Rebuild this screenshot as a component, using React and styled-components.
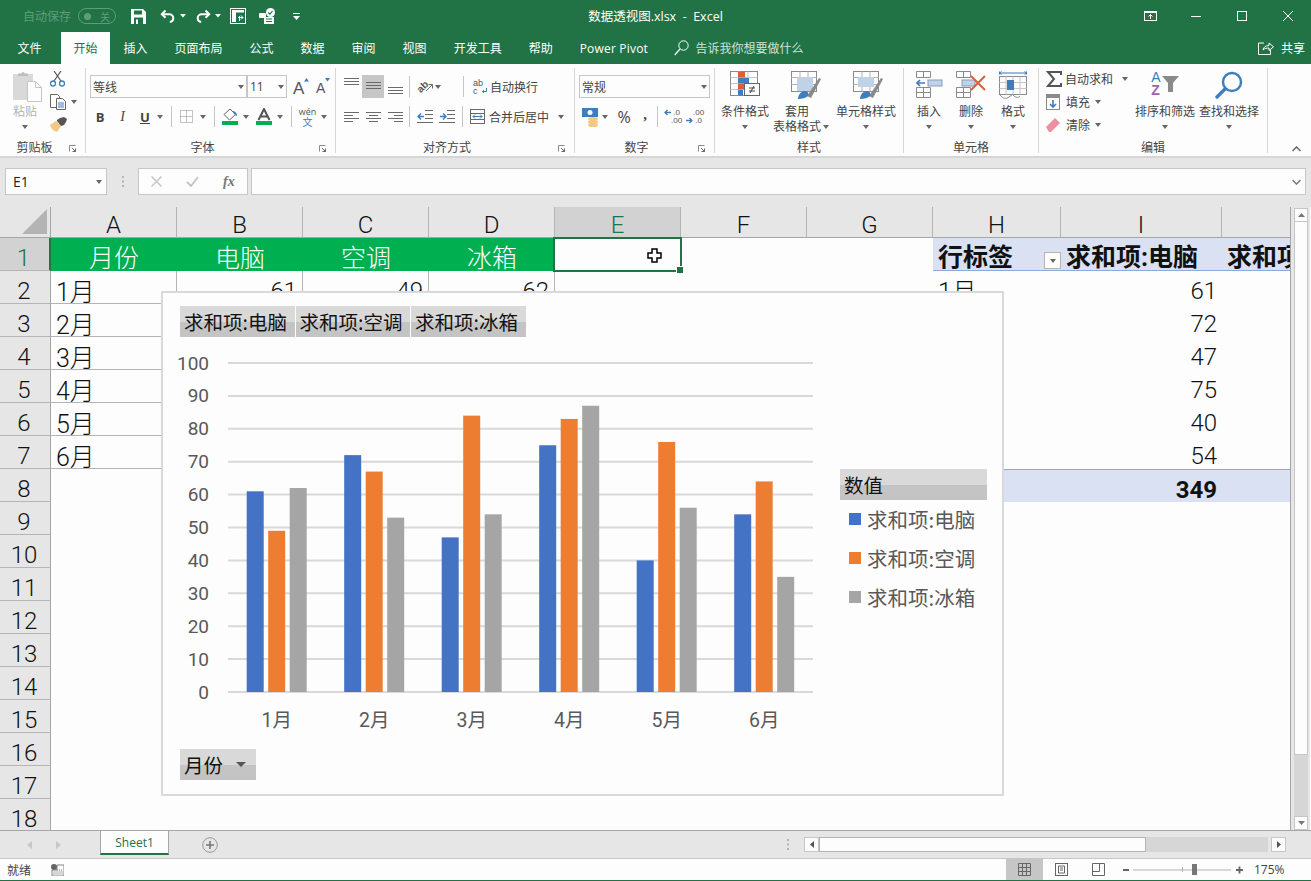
import React from "react"
import styled, { createGlobalStyle } from "styled-components"

const GREEN = "#217346"
const UI_FONT = `"Open Sans", "Noto Sans CJK SC", sans-serif`
const SHEET_FONT = `Roboto, "Noto Sans CJK SC", sans-serif`

const Global = createGlobalStyle`
  html, body { margin: 0; padding: 0; background: #fdfdfd; }
  * { box-sizing: border-box; }
`

const Svg = ({ w, h, children }) => (
  <svg width={w} height={h} viewBox={`0 0 ${w} ${h}`} fill="none" style={{ display: "block", flexShrink: 0 }}>
    {children}
  </svg>
)

/* ---------- title bar ---------- */
const Page = styled.div`
  width: 1311px;
  height: 881px;
  overflow: hidden;
  display: flex;
  flex-direction: column;
  font-family: ${UI_FONT};
  background: #fdfdfd;
`
const TitleBar = styled.div`
  height: 32px;
  background: ${GREEN};
  display: grid;
  grid-template-columns: 1fr auto 1fr;
  align-items: center;
  color: #fff;
`
const Quick = styled.div`
  display: flex;
  align-items: center;
  padding-left: 23px;
`
const AutoSave = styled.span`
  font-size: 12px;
  color: #5f9c7b;
  white-space: nowrap;
`
const Toggle = styled.span`
  width: 38px;
  height: 16px;
  margin: 0 15px 0 7px;
  border: 1px solid #5f9c7b;
  border-radius: 8px;
  display: flex;
  align-items: center;
  justify-content: space-between;
  padding: 0 5px;
  font-size: 10px;
  color: #5f9c7b;
  &::before {
    content: "";
    width: 7px;
    height: 7px;
    border-radius: 50%;
    background: #5f9c7b;
  }
`
const QuickSlot = styled.span`
  display: flex;
  align-items: center;
  margin-left: ${p => p.$ml || 0}px;
`
const DocTitle = styled.div`
  font-size: 12.5px;
  padding-bottom: 1px;
  white-space: pre;
`
const WinControls = styled.div`
  display: flex;
  justify-content: flex-end;
`
const WinBtn = styled.span`
  width: 46px;
  height: 32px;
  display: flex;
  align-items: center;
  justify-content: center;
`

/* ---------- tabs ---------- */
const TabRow = styled.div`
  height: 32px;
  background: ${GREEN};
  display: flex;
  align-items: stretch;
  padding-left: 4px;
  color: #fff;
  font-size: 12px;
`
const Tab = styled.div`
  display: flex;
  align-items: center;
  padding: 0 ${p => (p.$active ? 12.5 : 13.5)}px;
  margin-left: ${p => p.$ml || 0}px;
  margin-right: ${p => p.$mr || 0}px;
  white-space: nowrap;
  background: ${p => (p.$active ? "#fdfdfd" : "transparent")};
  color: ${p => (p.$active ? GREEN : "#fff")};
  letter-spacing: ${p => (p.$spaced ? "0.2px" : "normal")};
`
const TellMe = styled.div`
  display: flex;
  align-items: center;
  gap: 7px;
  margin-left: 12px;
  color: #cfe3d8;
`
const Share = styled.div`
  margin-left: auto;
  padding-right: 6px;
  display: flex;
  align-items: center;
  gap: 7px;
`

/* ---------- ribbon ---------- */
const Ribbon = styled.div`
  height: 94px;
  display: flex;
  position: relative;
  background: #fdfdfd;
  border-bottom: 2px solid #d6d6d6;
  color: #444;
  font-size: 12px;
`
const Group = styled.div`
  width: ${p => p.$w}px;
  height: 92px;
  flex-shrink: 0;
  display: flex;
  flex-direction: column;
`
const GroupBody = styled.div`
  flex: 1;
  display: flex;
  min-height: 0;
  padding-left: ${p => p.$pl || 0}px;
`
const LabelRow = styled.div`
  height: 20px;
  padding-top: 4px;
  display: flex;
  align-items: center;
`
const GroupName = styled.div`
  flex: 1;
  text-align: center;
  font-size: 12px;
  line-height: 16px;
`
const Launcher = styled.span`
  width: 16px;
  display: flex;
  justify-content: flex-start;
`
const GroupSep = styled.div`
  width: 1px;
  height: 85px;
  margin-top: 4px;
  background: #d6d6d6;
  flex-shrink: 0;
`
const Stack = styled.div`
  display: flex;
  flex-direction: column;
  padding-top: 11px;
  gap: 7px;
`
const ToolRow = styled.div`
  display: flex;
  align-items: center;
  height: 23px;
`
const Tool = styled.span`
  width: ${p => p.$w}px;
  height: 23px;
  margin-left: ${p => p.$ml || 0}px;
  padding-bottom: ${p => p.$pb || 0}px;
  display: flex;
  align-items: center;
  justify-content: ${p => (p.$left ? "flex-start" : "center")};
  flex-shrink: 0;
  white-space: nowrap;
  background: ${p => (p.$on ? "#c6c6c6" : "transparent")};
  font-family: ${p => (p.$serif ? `"Liberation Serif", serif` : "inherit")};
  font-size: ${p => p.$fs || 12}px;
  font-weight: ${p => (p.$bold ? 700 : 400)};
  font-style: ${p => (p.$italic ? "italic" : "normal")};
  text-decoration: ${p => (p.$under ? "underline" : "none")};
  color: ${p => p.$color || "#444"};
`
const Caret = styled.span`
  width: 10px;
  height: 23px;
  margin-left: ${p => p.$ml || 0}px;
  flex-shrink: 0;
  display: flex;
  align-items: center;
  justify-content: center;
  &::before {
    content: "";
    border-left: 3.5px solid transparent;
    border-right: 3.5px solid transparent;
    border-top: 4px solid #666;
  }
`
const ToolSep = styled.span`
  width: 1px;
  height: 21px;
  margin-left: ${p => p.$ml || 0}px;
  background: #c6c6c6;
  flex-shrink: 0;
`
const Combo = styled.div`
  width: ${p => p.$w}px;
  height: 23px;
  border: 1px solid #c6c6c6;
  background: #fdfdfd;
  display: flex;
  align-items: center;
  justify-content: space-between;
  padding-left: 2px;
  color: #444;
  font-size: 12px;
  flex-shrink: 0;
`
const GrowBtn = styled.span`
  width: 15px;
  height: 23px;
  margin-left: ${p => p.$ml || 0}px;
  display: flex;
  align-items: flex-end;
  flex-shrink: 0;
  font-family: "Liberation Sans", sans-serif;
  font-size: ${p => p.$fs}px;
  line-height: 19px;
  color: #555;
`
const GrowMark = styled.span`
  align-self: flex-start;
  margin-top: 3px;
`
const WenStack = styled.span`
  display: flex;
  flex-direction: column;
  align-items: center;
  font-size: 9px;
  line-height: 10px;
  color: #555;
`
const WenChar = styled.span`
  color: #3f7dbd;
  font-size: 10px;
  line-height: 10px;
`
const DecStack = styled.span`
  display: grid;
  grid-template-columns: 7px 9px;
  font-family: "Liberation Sans", sans-serif;
  font-size: 8px;
  line-height: 8px;
  align-items: center;
  text-align: right;
  color: #555;
`
const Orient = styled.span`
  display: flex;
  align-items: center;
  font-family: "Liberation Sans", sans-serif;
  font-size: 10px;
  font-weight: 700;
  color: #555;
`
const OrientText = styled.span`
  display: block;
  line-height: 10px;
  transform: rotate(-45deg);
  margin-right: -2px;
`
const Large = styled.div`
  width: ${p => p.$w}px;
  margin-left: ${p => p.$ml || 0}px;
  flex-shrink: 0;
  display: flex;
  flex-direction: column;
  align-items: center;
  padding-top: 7px;
  color: ${p => (p.$off ? "#b4b4b4" : "#444")};
  line-height: 15px;
`
const LargeIcon = styled.div`
  height: 33px;
  margin-left: ${p => p.$shift || 0}px;
  display: flex;
  align-items: flex-start;
  justify-content: center;
`
const LargeText = styled.div`
  white-space: nowrap;
  display: flex;
  align-items: center;
  height: 15px;
`
const LargeCaret = styled(Caret)`
  height: 15px;
`
const TrailCaret = styled(LargeCaret)`
  margin-right: -10px;
`
const SmallCol = styled.div`
  display: flex;
  flex-direction: column;
  padding-top: ${p => p.$pt || 4}px;
  margin-left: ${p => p.$ml || 0}px;
`
const SmallRow = styled.div`
  display: flex;
  align-items: center;
  height: 23px;
  gap: 3px;
  white-space: nowrap;
`
const Collapse = styled.span`
  position: absolute;
  right: 10px;
  bottom: 4px;
`

/* ---------- formula bar ---------- */
const FormulaBar = styled.div`
  height: 49px;
  background: #e6e6e6;
  display: flex;
  align-items: flex-start;
  padding: 10px 5px 0;
`
const NameBox = styled.div`
  width: 102px;
  height: 27px;
  border: 1px solid #c6c6c6;
  background: #fdfdfd;
  display: flex;
  align-items: center;
  justify-content: space-between;
  padding: 0 2px 0 7px;
  font-size: 14px;
  color: #222;
`
const Dots = styled.span`
  width: 31px;
  height: 27px;
  display: flex;
  align-items: center;
  justify-content: center;
`
const FxBox = styled.div`
  width: 110px;
  height: 27px;
  border: 1px solid #c6c6c6;
  background: #fdfdfd;
  display: flex;
  align-items: center;
  gap: 24px;
  padding-left: 12px;
`
const FxText = styled.span`
  font-family: "Liberation Serif", serif;
  font-style: italic;
  font-weight: 700;
  font-size: 14px;
  color: #777;
`
const FormulaInput = styled.div`
  flex: 1;
  height: 27px;
  margin-left: 3px;
  border: 1px solid #c6c6c6;
  background: #fdfdfd;
  display: flex;
  align-items: center;
  justify-content: flex-end;
  padding-right: 4px;
`

/* ---------- sheet ---------- */
const SheetRow = styled.div`
  height: 623px;
  display: flex;
`
const GridArea = styled.div`
  width: 1291px;
  height: 623px;
  position: relative;
  overflow: hidden;
  border-right: 1px solid #a6a6a6;
`
const Grid = styled.div`
  display: grid;
  grid-template-columns: 51px repeat(7, 126px) 128px 161px 68px;
  grid-template-rows: 31px;
  grid-auto-rows: 33px;
  font-family: ${SHEET_FONT};
  font-weight: 300;
  font-size: 24px;
  color: #111;
`
const Corner = styled.div`
  background: #e6e6e6;
  border-right: 1px solid #a6a6a6;
  border-bottom: 1px solid #a6a6a6;
  display: flex;
  align-items: flex-end;
  justify-content: flex-end;
  padding: 0 3px 3px 0;
`
const ColHead = styled.div`
  background: ${p => (p.$active ? "#d2d2d2" : "#e6e6e6")};
  color: ${p => (p.$active ? GREEN : "#111")};
  border-bottom: 1px solid #a6a6a6;
  border-right: ${p => (p.$last ? "none" : "1px solid #b4b4b4")};
  display: flex;
  align-items: center;
  justify-content: center;
  padding-top: 5px;
`
const RowHead = styled.div`
  background: ${p => (p.$active ? "#d2d2d2" : "#e6e6e6")};
  color: ${p => (p.$active ? GREEN : "#111")};
  border-right: ${p => (p.$active ? `2px solid ${GREEN}` : "1px solid #a6a6a6")};
  border-bottom: 1px solid #b4b4b4;
  display: flex;
  align-items: center;
  justify-content: center;
  padding: 7px 2px 0 0;
`
const Cell = styled.div`
  position: relative;
  overflow: hidden;
  white-space: nowrap;
  display: flex;
  align-items: center;
  justify-content: ${p => ({ right: "flex-end", center: "center" }[p.$align] || "flex-start")};
  padding: ${p => p.$pt ?? 7}px 5px 0;
  background: ${p => p.$bg || "transparent"};
  color: ${p => p.$color || "inherit"};
  font-size: ${p => p.$fs || 24}px;
  font-weight: ${p => (p.$bold ? 700 : "inherit")};
  border-right: ${p => (p.$line ? "1px solid #b4b4b4" : "none")};
  border-bottom: ${p => (p.$under ? `1px solid ${p.$under}` : "none")};
  border-top: ${p => (p.$over ? `1px solid ${p.$over}` : "none")};
`
const SelectedCell = styled.div`
  position: relative;
  z-index: 2;
  &::before {
    content: "";
    position: absolute;
    inset: -1px -1px -1px -2px;
    border: 2px solid ${GREEN};
  }
  &::after {
    content: "";
    position: absolute;
    right: -3px;
    bottom: -3px;
    width: 6px;
    height: 6px;
    background: ${GREEN};
    border: 1px solid #fdfdfd;
  }
`
const Pointer = styled.span`
  position: absolute;
  left: 92px;
  top: 10px;
`
const FilterBtn = styled.span`
  position: absolute;
  right: 0;
  bottom: 1px;
  width: 17px;
  height: 17px;
  background: #fdfdfd;
  border: 1px solid #b4b4b4;
  display: flex;
  align-items: center;
  justify-content: center;
  &::before {
    content: "";
    border-left: 3.5px solid transparent;
    border-right: 3.5px solid transparent;
    border-top: 4px solid #666;
  }
`

/* ---------- chart ---------- */
const Chart = styled.div`
  position: absolute;
  left: 161px;
  top: 84px;
  width: 843px;
  height: 505px;
  z-index: 5;
  background: #fdfdfd;
  border: 2px solid #d9d9d9;
  padding: 13px 17px 0;
  display: flex;
  flex-direction: column;
  font-family: "Noto Sans CJK SC", sans-serif;
`
const FieldRow = styled.div`
  display: flex;
  gap: 1px;
`
const FieldBtn = styled.div`
  width: ${p => p.$w}px;
  height: 31px;
  background: linear-gradient(#d9d9d9 0 53%, #c4c4c4 53% 100%);
  display: flex;
  align-items: center;
  justify-content: space-between;
  padding: 0 4px;
  font-size: 19.5px;
  color: #111;
  white-space: nowrap;
  flex-shrink: 0;
`
const FieldCaret = styled.span`
  margin-right: 6px;
`
const PlotRow = styled.div`
  display: flex;
  margin: 8px 0 14px -17px;
`
const Legend = styled.div`
  margin: 124px 0 0 15px;
  display: flex;
  flex-direction: column;
`
const LegendList = styled.div`
  margin-top: -1px;
`
const LegendItem = styled.div`
  height: 39px;
  display: flex;
  align-items: center;
  gap: 6px;
  padding-left: 9px;
  font-size: 20.5px;
  color: #595959;
  white-space: nowrap;
`
const Swatch = styled.span`
  width: 12px;
  height: 12px;
  background: ${p => p.$c};
`
const PlotText = styled.text`
  font-family: Roboto, "Noto Sans CJK SC", sans-serif;
  font-size: ${p => p.$fs || 19}px;
  fill: #595959;
`

/* ---------- scrollbars / bottom ---------- */
const VScroll = styled.div`
  width: 19px;
  background: #e6e6e6;
  display: flex;
  flex-direction: column;
  padding: 1px 2px 0 3px;
`
const ScrollBtn = styled.span`
  height: 14px;
  background: #fdfdfd;
  border: 1px solid #c6c6c6;
  display: flex;
  align-items: center;
  justify-content: center;
  flex-shrink: 0;
`
const VThumb = styled.div`
  height: 533px;
  background: #fdfdfd;
  border: 1px solid #c6c6c6;
  border-top: none;
`
const VTrack = styled.div`
  flex: 1;
  background: #d6d6d6;
`
const TabBar = styled.div`
  height: 28px;
  background: #e6e6e6;
  border-top: 1px solid #a6a6a6;
  display: flex;
  align-items: flex-start;
`
const SheetNav = styled.div`
  width: 100px;
  height: 27px;
  display: flex;
  align-items: center;
  gap: 24px;
  padding-left: 27px;
`
const SheetTab = styled.div`
  width: 69px;
  height: 25px;
  margin-top: -1px;
  background: #fdfdfd;
  border: 1px solid #a6a6a6;
  border-bottom: 2px solid ${GREEN};
  color: ${GREEN};
  font-size: 12px;
  display: flex;
  align-items: center;
  justify-content: center;
`
const AddSheet = styled.span`
  margin: 6px 0 0 33px;
`
const HScrollWrap = styled.div`
  margin-left: auto;
  width: 532px;
  height: 27px;
  display: flex;
  align-items: center;
  padding-right: 25px;
`
const HDots = styled.span`
  width: 18px;
  display: flex;
  justify-content: center;
  margin-right: 7px;
`
const HBtn = styled(ScrollBtn)`
  width: 15px;
  height: 15px;
`
const HThumb = styled.div`
  width: 327px;
  height: 15px;
  background: #fdfdfd;
  border: 1px solid #b4b4b4;
  flex-shrink: 0;
`
const HTrack = styled.div`
  flex: 1;
  height: 15px;
  background: #d6d6d6;
  margin-right: 3px;
`
const StatusBar = styled.div`
  height: 23px;
  border-top: 1px solid #c6c6c6;
  border-bottom: 1px solid ${GREEN};
  background: #fdfdfd;
  display: flex;
  align-items: center;
  font-size: 12px;
  color: #444;
  padding-left: 7px;
`
const StatusLeft = styled.div`
  display: flex;
  align-items: center;
  gap: 20px;
`
const StatusRight = styled.div`
  margin-left: auto;
  display: flex;
  align-items: center;
  height: 100%;
`
const ViewBtn = styled.span`
  width: 37px;
  height: 100%;
  display: flex;
  align-items: center;
  justify-content: center;
  background: ${p => (p.$on ? "#c6c6c6" : "transparent")};
`
const Zoom = styled.div`
  display: flex;
  align-items: center;
  width: 120px;
  height: 100%;
  margin-left: 6px;
`
const Percent = styled.span`
  width: 68px;
  padding-left: 11px;
  white-space: nowrap;
`

/* ---------- icons ---------- */
const G = "#6a6a6a"
const B = "#3f7dbd"

const SaveIcon = () => (
  <Svg w={15} h={15}>
    <path d="M0 0h12l3 3v12H0z" fill="#fff" />
    <rect x="3" y="1.5" width="8" height="4" fill={GREEN} />
    <rect x="3" y="8.5" width="9" height="6.5" fill={GREEN} />
    <rect x="5" y="10.5" width="2" height="4.5" fill="#fff" />
  </Svg>
)
const UndoIcon = ({ flip }) => (
  <Svg w={16} h={14}>
    <g transform={flip ? "translate(16,0) scale(-1,1)" : undefined}>
      <path d="M5.5 1.5 1.8 5.2l3.7 3.6" stroke="#fff" strokeWidth="2" />
      <path d="M2.5 5.2h6.8a4 4 0 0 1 4 4 4 4 0 0 1-3.5 3.8" stroke="#fff" strokeWidth="2" />
    </g>
  </Svg>
)
const SmallCaret = () => (
  <Svg w={7} h={4}>
    <path d="M0 0h6L3 3.5z" fill="#fff" />
  </Svg>
)
const PivotIcon = () => (
  <Svg w={16} h={16}>
    <rect x=".5" y=".5" width="15" height="15" stroke="#fff" />
    <path d="M2 2h12v2.5H6V14H2z" fill="#fff" />
    <path d="M8 9.5h5M11 7.5l2 2-2 2M9.5 13V8" stroke="#fff" />
  </Svg>
)
const PeopleIcon = () => (
  <Svg w={17} h={16}>
    <circle cx="11.5" cy="4.5" r="4.5" fill="#fff" />
    <path d="m9.3 4.5 1.6 1.6 2.6-2.9" stroke={GREEN} strokeWidth="1.2" />
    <rect x="0" y="5" width="7" height="5" rx="1" fill="#fff" />
    <rect x="5" y="9" width="10" height="7" fill="#fff" />
    <path d="M7 11h6M7 13.5h6" stroke={GREEN} />
  </Svg>
)
const MoreIcon = () => (
  <Svg w={7} h={7}>
    <path d="M0 0h7v1H0z" fill="#fff" />
    <path d="M0 3h7L3.5 7z" fill="#fff" />
  </Svg>
)
const SearchIcon = () => (
  <Svg w={15} h={16}>
    <circle cx="9.5" cy="5.5" r="4.7" stroke="#fff" />
    <path d="M6 9 .7 15" stroke="#fff" strokeWidth="1.2" />
  </Svg>
)
const ShareIcon = () => (
  <Svg w={16} h={14}>
    <path d="M6 2H.5v11.5h12V9" stroke="#fff" />
    <path d="M5 9c.5-3 3-4.5 6-4.5V2l4.5 3.8L11 9.5V7c-2.5 0-4.5.5-6 2z" stroke="#fff" />
  </Svg>
)
const PasteIcon = () => (
  <Svg w={29} h={31}>
    <rect x="0" y="3" width="20" height="26" fill="#d9d9d9" />
    <path d="M5 5V2.5h3.5a1.500 1.500 0 0 1 3 0H15V5z" fill="#bdbdbd" />
    <path d="M14.5 10.5h8l6 6v14h-14z" fill="#fdfdfd" stroke="#c6c6c6" />
    <path d="M22.5 10.5v6h6" stroke="#c6c6c6" />
  </Svg>
)
const CutIcon = () => (
  <Svg w={15} h={16}>
    <path d="m4 10 7-10M11 10 4 0" stroke="#555" strokeWidth="1.2" />
    <circle cx="3" cy="12.5" r="2.5" stroke={B} strokeWidth="1.3" />
    <circle cx="12" cy="12.5" r="2.5" stroke={B} strokeWidth="1.3" />
  </Svg>
)
const CopyIcon = () => (
  <Svg w={16} h={16}>
    <path d="M.5.5h7l2 2v11h-9z" fill="#fdfdfd" stroke="#666" />
    <path d="M6.5 4.5h6l3 3v8h-9z" fill="#fdfdfd" stroke="#666" />
    <path d="M8 9h6M8 11h6M8 13h6" stroke={B} />
  </Svg>
)
const BrushIcon = () => (
  <Svg w={17} h={15}>
    <path d="m0 8 6-4 5 5-4 6C5 15 1 12 0 8z" fill="#f2c882" />
    <path d="m7 3 3-2 4-1 3 2-1 3-2 3-3 1-4-5z" fill="#555" />
  </Svg>
)
const GrowArrow = ({ up }) => (
  <Svg w={5} h={4}>
    <path d={up ? "M0 3.5 2.5 0 5 3.5z" : "M0 0h5L2.5 3.5z"} fill={B} />
  </Svg>
)
const BorderIcon = () => (
  <Svg w={13} h={13}>
    <path d="M.5.5h12v12H.5zM6.5.5v12M.5 6.5h12" stroke="#8a8a8a" strokeDasharray="1 1" />
  </Svg>
)
const FillIcon = () => (
  <Svg w={16} h={18}>
    <path d="m8 1 5.5 5.5L7.5 12 2 6.5z" stroke="#666" fill="#fdfdfd" />
    <path d="M10 3c3 0 5 2 5 5l-2-1z" fill={B} />
    <rect x="0" y="13" width="16" height="4" fill="#00b050" />
  </Svg>
)
const ColorA = () => (
  <Svg w={16} h={18}>
    <path d="M2.5 12 8 1l5.5 11M4.5 8.5h7" stroke="#555" strokeWidth="2" />
    <rect x="0" y="13" width="16" height="4" fill="#00b050" />
  </Svg>
)
/* four short rows, used by the horizontal alignment buttons */
const AlignLines = ({ xs, ws }) => (
  <Svg w={15} h={10}>
    {[0, 1, 2, 3].map(i => (
      <rect key={i} x={xs[i % 2]} y={i * 3} width={ws[i % 2]} height="1" fill={G} />
    ))}
  </Svg>
)
/* three rows, placed at the top, middle or bottom of the 23px button */
const VAlignLines = ({ top }) => (
  <Svg w={15} h={23}>
    {[0, 1, 2].map(i => (
      <rect key={i} x="0" y={top + i * 3} width="15" height="1" fill={G} />
    ))}
  </Svg>
)
const IndentIcon = ({ right }) => (
  <Svg w={16} h={13}>
    <path d="M8 .5h8M8 4.5h8M8 8.5h8M0 12.5h16" stroke={G} />
    <path d={right ? "M1 6.5h6M4 3.5l3 3-3 3" : "M1 6.5h6M4 3.5l-3 3 3 3"} stroke={B} strokeWidth="1.4" />
  </Svg>
)
const WrapStack = styled.span`
  display: grid;
  grid-template-columns: 9px 4px;
  font-family: "Liberation Sans", sans-serif;
  font-size: 9px;
  line-height: 8px;
  color: #555;
`
const MergeIcon = () => (
  <Svg w={15} h={15}>
    <rect x=".5" y=".5" width="14" height="14" stroke={G} />
    <path d="M.5 4.5h14M.5 10.5h14" stroke={G} />
    <path d="M3 7.5h9M5 5.5l-2 2 2 2M10 5.5l2 2-2 2" stroke={B} />
  </Svg>
)
const CurrencyIcon = () => (
  <Svg w={18} h={20}>
    <rect x="0" y="1" width="16" height="9" fill={B} />
    <circle cx="8" cy="5.5" r="2.5" fill="#fdfdfd" />
    <ellipse cx="11" cy="12" rx="5" ry="2" fill="#f2c882" />
    <ellipse cx="11" cy="15" rx="5" ry="2" fill="#f2c882" />
    <ellipse cx="11" cy="18" rx="5" ry="2" fill="#f2c882" />
  </Svg>
)
const DecArrow = ({ right }) => (
  <Svg w={7} h={7}>
    <path d={right ? "M0 3.5h6M3.5 1 6 3.5 3.5 6" : "M1 3.5h6M3.5 1 1 3.5 3.5 6"} stroke={B} strokeWidth="1.3" />
  </Svg>
)
const CondIcon = () => (
  <Svg w={30} h={26}>
    <rect x=".5" y=".5" width="27" height="24" stroke="#8a8a8a" />
    <path d="M.5 6.5h27M.5 12.5h27M.5 18.5h27M9 .5v24M18 .5v24" stroke="#c6c6c6" />
    <rect x="8" y="1" width="7" height="5.5" fill="#d9603b" />
    <rect x="8" y="7" width="11" height="5.5" fill={B} />
    <rect x="8" y="13" width="9" height="5.5" fill="#d9603b" />
    <rect x="8" y="19" width="5" height="5.5" fill={B} />
    <rect x="14.5" y="12.5" width="15" height="12" fill="#fdfdfd" stroke="#666" />
    <path d="M19 17h6M19 20h6M24 15l-4 7" stroke="#444" />
  </Svg>
)
const TableStyle = ({ full }) => (
  <Svg w={30} h={28}>
    <rect x=".5" y=".5" width="25" height="20" stroke="#8a8a8a" />
    <path d="M.5 6.5h25M.5 13.5h25M9 .5v20M17 .5v20" stroke="#b4b4b4" />
    <rect x={full ? 5 : 6} y="6" width="16" height={full ? 10 : 14} fill="#bfd2e8" />
    <path d="m16 25 12-18 2 1-10 19z" fill="#8a8a8a" />
    <path d="M7 28c0-4 3-8 7-8 3 0 4 3 3 5-2 2-6 3-10 3z" fill={B} />
  </Svg>
)
const InsertIcon = ({ del }) => (
  <Svg w={del ? 30 : 27} h={28}>
    <path d="M.5.5h14v6H.5zM7.5.5v6M.5 16.5h14v10H.5zM7.5 16.5v10M.5 21.5h14" stroke="#8a8a8a" />
    <rect x={del ? 6 : 12} y="9" width={del ? 13 : 14} height="6" fill="#bfd2e8" stroke="#8a9db5" />
    {!del && <path d="M1 12h8M4 9l-3 3 3 3" stroke={B} strokeWidth="1.6" />}
    {del && <path d="m15 5 14 14M29 5 15 19" stroke="#d9603b" strokeWidth="2" />}
  </Svg>
)
const FormatIcon = () => (
  <Svg w={28} h={29}>
    <path d="M0 2h28M2.5.5l-2 1.5 2 1.5M25.5.5l2 1.5-2 1.5M.5.5v3M27.5.5v3" stroke={B} />
    <rect x=".5" y="5.5" width="27" height="18" stroke="#8a8a8a" />
    <path d="M.5 11.5h27M.5 17.5h27M7 5.5v18M14 5.5v18M21 5.5v18" stroke="#c6c6c6" />
    <rect x="8" y="9" width="7" height="10" fill={B} />
    <path d="M1 24c3 4 6 4 9 2l3-2M14 24c3 3 5 3 7 1" stroke="#8a8a8a" />
  </Svg>
)
const SumIcon = () => (
  <Svg w={16} h={16}>
    <path d="M15 4V1H2l6 7-6 7h13v-3" stroke="#555" strokeWidth="2" />
  </Svg>
)
const FillDown = () => (
  <Svg w={14} h={16}>
    <rect x=".5" y=".5" width="13" height="15" stroke="#8a8a8a" />
    <rect x="1" y="1" width="12" height="3" fill="#8a8a8a" />
    <path d="M7 6v7M4 10l3 3 3-3" stroke={B} strokeWidth="1.6" />
  </Svg>
)
const Eraser = () => (
  <Svg w={14} h={14}>
    <path d="m0 9 9-9 5 5-9 9H3z" fill="#ec8fa0" />
  </Svg>
)
const SortWrap = styled.span`
  display: flex;
  align-items: center;
`
const SortLetters = styled.span`
  display: flex;
  flex-direction: column;
  font-family: "Liberation Sans", sans-serif;
  font-size: 14px;
  line-height: 13px;
  color: ${B};
  margin-right: 1px;
`
const SortZ = styled.span`
  color: #9a63b5;
  font-weight: 700;
`
const FunnelIcon = () => (
  <Svg w={17} h={16}>
    <path d="M0 0h17l-6 7v9H6V7z" fill="#8a8a8a" />
  </Svg>
)
const FindIcon = () => (
  <Svg w={28} h={28}>
    <circle cx="17" cy="11" r="9" stroke={B} strokeWidth="2.4" />
    <path d="M10 18 2 26" stroke={B} strokeWidth="3.4" strokeLinecap="round" />
  </Svg>
)
const LaunchIcon = () => (
  <Svg w={7} h={7}>
    <path d="M.5 6.5v-6h6" stroke="#8a8a8a" />
    <path d="M3 3 6.5 6.5M6.5 3.5v3h-3" stroke="#666" />
  </Svg>
)
const SheetCursor = () => (
  <Svg w={16} h={16}>
    <path d="M5 1h5v4h4v5h-4v4H5v-4H1V5h4z" fill="#fff" stroke="#000" strokeWidth="1.5" />
  </Svg>
)

const Launch = () => <Launcher><LaunchIcon /></Launcher>

/* ---------- data ---------- */
const COLS = ["A", "B", "C", "D", "E", "F", "G", "H", "I", ""]
const MONTHS = ["1月", "2月", "3月", "4月", "5月", "6月"]
const SERIES = [
  { name: "求和项:电脑", color: "#4472c4", data: [61, 72, 47, 75, 40, 54] },
  { name: "求和项:空调", color: "#ed7d31", data: [49, 67, 84, 83, 76, 64] },
  { name: "求和项:冰箱", color: "#a5a5a5", data: [62, 53, 54, 87, 56, 35] },
]
const TABS = ["页面布局", "公式", "数据", "审阅", "视图", "开发工具", "帮助"]

function Plot() {
  const y = v => 347 - 3.29 * v
  return (
    <svg width="662" height="390" viewBox="0 0 662 390" style={{ display: "block", flexShrink: 0 }}>
      {Array.from({ length: 11 }, (_, i) => i * 10).map(v => (
        <g key={v}>
          <line x1="65" x2="650" y1={y(v)} y2={y(v)} stroke="#d9d9d9" strokeWidth="2" />
          <PlotText x="46" y={y(v) + 6.5} textAnchor="end">{v}</PlotText>
        </g>
      ))}
      {MONTHS.map((m, i) => {
        const start = 83.7 + i * 97.5
        return (
          <g key={m}>
            {SERIES.map((s, k) => (
              <rect key={s.name} x={start + k * 21.5} y={y(s.data[i])} width="17" height={3.29 * s.data[i]} fill={s.color} />
            ))}
            <PlotText x={113.75 + i * 97.5} y="382" textAnchor="middle" $fs={19.5}>{m}</PlotText>
          </g>
        )
      })}
    </svg>
  )
}

function SheetGrid() {
  const rows = []
  for (let r = 2; r <= 18; r++) {
    const i = r - 2
    const inTable = i < 6
    const under = inTable ? "#b4b4b4" : null
    rows.push(
      <React.Fragment key={r}>
        <RowHead>{r}</RowHead>
        <Cell $line={inTable} $under={under} $fs={25} $pt={5}>{inTable ? MONTHS[i] : ""}</Cell>
        {SERIES.map(s => (
          // only row 2 shows above the chart
          <Cell key={s.name} $align="right" $line={inTable} $under={under}>{r === 2 ? s.data[0] : ""}</Cell>
        ))}
        <Cell /><Cell /><Cell />
        {r === 2 ? <Cell $fs={25} $pt={5}>1月</Cell> : r === 8 ? <Cell $bg="#d9e1f2" $over="#8ea9db" /> : <Cell />}
        {inTable && <Cell $align="right">{SERIES[0].data[i]}</Cell>}
        {r === 8 && <Cell $bg="#d9e1f2" $over="#8ea9db" $bold $align="right">349</Cell>}
        {r > 8 && <Cell />}
        {r === 8 ? <Cell $bg="#d9e1f2" $over="#8ea9db" /> : <Cell />}
      </React.Fragment>
    )
  }
  return (
    <Grid>
      <Corner>
        <Svg w={25} h={25}><path d="M25 0v25H0z" fill="#b4b4b4" /></Svg>
      </Corner>
      {COLS.map((c, i) => (
        <ColHead key={i} $active={c === "E"} $last={i === 9}>{c}</ColHead>
      ))}
      <RowHead $active>1</RowHead>
      {["月份", "电脑", "空调", "冰箱"].map(t => (
        <Cell key={t} $bg="#00b050" $color="#fff" $align="center" $pt={2} $fs={25}>{t}</Cell>
      ))}
      <SelectedCell>
        <Pointer><SheetCursor /></Pointer>
      </SelectedCell>
      <Cell /><Cell />
      <Cell $bg="#d9e1f2" $under="#8ea9db" $bold $pt={2} $fs={25}>行标签<FilterBtn /></Cell>
      <Cell $bg="#d9e1f2" $under="#8ea9db" $bold $pt={2} $fs={25}>求和项:电脑</Cell>
      <Cell $bg="#d9e1f2" $under="#8ea9db" $bold $pt={2} $fs={25}>求和项:空调</Cell>
      {rows}
    </Grid>
  )
}

export default function App() {
  return (
    <Page>
      <Global />
      <TitleBar>
        <Quick>
          <AutoSave>自动保存</AutoSave>
          <Toggle>关</Toggle>
          <QuickSlot><SaveIcon /></QuickSlot>
          <QuickSlot $ml={14}><UndoIcon /></QuickSlot>
          <QuickSlot $ml={4}><SmallCaret /></QuickSlot>
          <QuickSlot $ml={8}><UndoIcon flip /></QuickSlot>
          <QuickSlot $ml={4}><SmallCaret /></QuickSlot>
          <QuickSlot $ml={8}><PivotIcon /></QuickSlot>
          <QuickSlot $ml={13}><PeopleIcon /></QuickSlot>
          <QuickSlot $ml={17}><MoreIcon /></QuickSlot>
        </Quick>
        <DocTitle>数据透视图.xlsx  -  Excel</DocTitle>
        <WinControls>
          <WinBtn>
            <Svg w={13} h={10}>
              <rect x=".5" y=".5" width="12" height="9" stroke="#fff" />
              <path d="M1 1.5h11M6.5 8V4M4.5 5.5l2-2 2 2" stroke="#fff" />
            </Svg>
          </WinBtn>
          <WinBtn><Svg w={10} h={1}><rect width="10" height="1" fill="#fff" /></Svg></WinBtn>
          <WinBtn><Svg w={10} h={10}><rect x=".5" y=".5" width="9" height="9" stroke="#fff" /></Svg></WinBtn>
          <WinBtn><Svg w={10} h={10}><path d="m0 0 10 10M10 0 0 10" stroke="#fff" /></Svg></WinBtn>
        </WinControls>
      </TitleBar>

      <TabRow>
        <Tab $mr={6}>文件</Tab>
        <Tab $active>开始</Tab>
        <Tab>插入</Tab>
        {TABS.map(t => <Tab key={t}>{t}</Tab>)}
        <Tab $spaced>Power Pivot</Tab>
        <TellMe>
          <SearchIcon />
          <span>告诉我你想要做什么</span>
        </TellMe>
        <Share>
          <ShareIcon />
          <span>共享</span>
        </Share>
      </TabRow>

      <Ribbon>
        <Group $w={85}>
          <GroupBody>
            <Large $w={46} $off $ml={2}>
              <LargeIcon $shift={4}><PasteIcon /></LargeIcon>
              <LargeText>粘贴</LargeText>
              <LargeCaret />
            </Large>
            <SmallCol $pt={3} $ml={2}>
              <SmallRow><CutIcon /></SmallRow>
              <SmallRow><CopyIcon /><Caret /></SmallRow>
              <SmallRow><BrushIcon /></SmallRow>
            </SmallCol>
          </GroupBody>
          <LabelRow><GroupName>剪贴板</GroupName><Launch /></LabelRow>
        </Group>
        <GroupSep />

        <Group $w={249}>
          <GroupBody $pl={4}>
            <Stack>
              <ToolRow>
                <Combo $w={157}>等线<Caret /></Combo>
                <Combo $w={40}>11<Caret /></Combo>
                <GrowBtn $ml={6} $fs={17}>A<GrowMark><GrowArrow up /></GrowMark></GrowBtn>
                <GrowBtn $ml={8} $fs={14}>A<GrowMark><GrowArrow /></GrowMark></GrowBtn>
              </ToolRow>
              <ToolRow>
                <Tool $w={20} $bold $fs={13}>B</Tool>
                <Tool $w={25} $italic $serif $fs={14}>I</Tool>
                <Tool $w={20} $fs={13} $bold $under>U</Tool>
                <Caret />
                <ToolSep $ml={6} />
                <Tool $w={23} $ml={3}><BorderIcon /></Tool>
                <Caret />
                <ToolSep $ml={6} />
                <Tool $w={22} $ml={4}><FillIcon /></Tool>
                <Caret />
                <Tool $w={22} $ml={2}><ColorA /></Tool>
                <Caret />
                <ToolSep $ml={6} />
                <Tool $w={23} $ml={4}>
                  <WenStack>wén<WenChar>文</WenChar></WenStack>
                </Tool>
                <Caret />
              </ToolRow>
            </Stack>
          </GroupBody>
          <LabelRow><GroupName>字体</GroupName><Launch /></LabelRow>
        </Group>
        <GroupSep />

        <Group $w={238}>
          <GroupBody $pl={4}>
            <Stack>
              <ToolRow>
                <Tool $w={22}><VAlignLines top={3} /></Tool>
                <Tool $w={22} $on><VAlignLines top={7} /></Tool>
                <Tool $w={22}><VAlignLines top={12} /></Tool>
                <ToolSep $ml={3} />
                <Tool $w={16} $ml={7}>
                  <Orient>
                    <OrientText>ab</OrientText>
                    <Svg w={7} h={8}><path d="m0 8 6-6M2.500 1.500h4v4" stroke={G} /></Svg>
                  </Orient>
                </Tool>
                <Caret />
                <ToolSep $ml={20} />
                <Tool $w={13} $ml={9}>
                  <WrapStack>
                    <span>ab</span><span />
                    <span>c</span>
                    <Svg w={5} h={8}><path d="M4.500 1v3.500H.5M2 3 .5 4.500 2 6" stroke={B} /></Svg>
                  </WrapStack>
                </Tool>
                <Tool $w={50} $ml={4} $left>自动换行</Tool>
              </ToolRow>
              <ToolRow>
                <Tool $w={22}><AlignLines xs={[0, 0]} ws={[15, 9]} /></Tool>
                <Tool $w={22}><AlignLines xs={[0, 3]} ws={[15, 9]} /></Tool>
                <Tool $w={22}><AlignLines xs={[0, 6]} ws={[15, 9]} /></Tool>
                <ToolSep $ml={3} />
                <Tool $w={16} $ml={7}><IndentIcon /></Tool>
                <Tool $w={16} $ml={6}><IndentIcon right /></Tool>
                <ToolSep $ml={7} />
                <Tool $w={15} $ml={7}><MergeIcon /></Tool>
                <Tool $w={60} $ml={4} $left>合并后居中</Tool>
                <Caret $ml={7} />
              </ToolRow>
            </Stack>
          </GroupBody>
          <LabelRow><GroupName>对齐方式</GroupName><Launch /></LabelRow>
        </Group>
        <GroupSep />

        <Group $w={139}>
          <GroupBody $pl={4}>
            <Stack>
              <ToolRow>
                <Combo $w={131}>常规<Caret /></Combo>
              </ToolRow>
              <ToolRow>
                <Tool $w={18} $ml={3}><CurrencyIcon /></Tool>
                <Caret />
                <Tool $w={16} $ml={6} $fs={16}>%</Tool>
                <Tool $w={16} $ml={5} $bold $fs={15} $pb={5} $serif>,</Tool>
                <ToolSep $ml={4} />
                <Tool $w={16} $ml={6}>
                  <DecStack>
                    <DecArrow /><span>.0</span>
                    <span />
                    <span>.00</span>
                  </DecStack>
                </Tool>
                <Tool $w={16} $ml={6}>
                  <DecStack>
                    <span />
                    <span>.00</span>
                    <DecArrow right /><span>.0</span>
                  </DecStack>
                </Tool>
              </ToolRow>
            </Stack>
          </GroupBody>
          <LabelRow><GroupName>数字</GroupName><Launch /></LabelRow>
        </Group>
        <GroupSep />

        <Group $w={188}>
          <GroupBody>
            <Large $w={54} $ml={3}>
              <LargeIcon><CondIcon /></LargeIcon>
              <LargeText>条件格式</LargeText>
              <LargeCaret />
            </Large>
            <Large $w={50}>
              <LargeIcon $shift={18}><TableStyle /></LargeIcon>
              <LargeText>套用</LargeText>
              <LargeText>表格格式<TrailCaret /></LargeText>
            </Large>
            <Large $w={74} $ml={7}>
              <LargeIcon $shift={4}><TableStyle full /></LargeIcon>
              <LargeText>单元格样式</LargeText>
              <LargeCaret />
            </Large>
          </GroupBody>
          <LabelRow><GroupName>样式</GroupName></LabelRow>
        </Group>
        <GroupSep />

        <Group $w={134}>
          <GroupBody $pl={4}>
            <Large $w={42}>
              <LargeIcon><InsertIcon /></LargeIcon>
              <LargeText>插入</LargeText>
              <LargeCaret />
            </Large>
            <Large $w={42}>
              <LargeIcon><InsertIcon del /></LargeIcon>
              <LargeText>删除</LargeText>
              <LargeCaret />
            </Large>
            <Large $w={42}>
              <LargeIcon><FormatIcon /></LargeIcon>
              <LargeText>格式</LargeText>
              <LargeCaret />
            </Large>
          </GroupBody>
          <LabelRow><GroupName>单元格</GroupName></LabelRow>
        </Group>
        <GroupSep />

        <Group $w={228}>
          <GroupBody $pl={7}>
            <SmallCol $pt={3}>
              <SmallRow><SumIcon />自动求和<Caret $ml={4} /></SmallRow>
              <SmallRow><FillDown />&nbsp;填充<Caret /></SmallRow>
              <SmallRow><Eraser />&nbsp;清除<Caret /></SmallRow>
            </SmallCol>
            <Large $w={64} $ml={3}>
              <LargeIcon>
                <SortWrap>
                  <SortLetters>A<SortZ>Z</SortZ></SortLetters>
                  <FunnelIcon />
                </SortWrap>
              </LargeIcon>
              <LargeText>排序和筛选</LargeText>
              <LargeCaret />
            </Large>
            <Large $w={64}>
              <LargeIcon><FindIcon /></LargeIcon>
              <LargeText>查找和选择</LargeText>
              <LargeCaret />
            </Large>
          </GroupBody>
          <LabelRow><GroupName>编辑</GroupName></LabelRow>
        </Group>
        <GroupSep />
        <Collapse>
          <Svg w={9} h={6}><path d="m.5 5 4-4 4 4" stroke="#666" strokeWidth="1.5" /></Svg>
        </Collapse>
      </Ribbon>

      <FormulaBar>
        <NameBox>E1<Caret /></NameBox>
        <Dots><Svg w={2} h={11}><path d="M0 0h2v2H0zM0 4.5h2v2H0zM0 9h2v2H0z" fill="#b4b4b4" /></Svg></Dots>
        <FxBox>
          <Svg w={11} h={11}><path d="m.5.5 10 10M10.5.5l-10 10" stroke="#c6c6c6" strokeWidth="1.5" /></Svg>
          <Svg w={13} h={11}><path d="m1 6 4 4 7-9" stroke="#c6c6c6" strokeWidth="2" /></Svg>
          <FxText>fx</FxText>
        </FxBox>
        <FormulaInput>
          <Svg w={9} h={6}><path d="m.5 1 4 4 4-4" stroke="#777" strokeWidth="1.5" /></Svg>
        </FormulaInput>
      </FormulaBar>

      <SheetRow>
        <GridArea>
          <SheetGrid />
          <Chart>
            <FieldRow>
              {SERIES.map(s => <FieldBtn key={s.name} $w={114.5}>{s.name}</FieldBtn>)}
            </FieldRow>
            <PlotRow>
              <Plot />
              <Legend>
                <FieldBtn $w={147}>数值</FieldBtn>
                <LegendList>
                  {SERIES.map(s => (
                    <LegendItem key={s.name}><Swatch $c={s.color} />{s.name}</LegendItem>
                  ))}
                </LegendList>
              </Legend>
            </PlotRow>
            <FieldBtn $w={76}>
              月份
              <FieldCaret><Svg w={10} h={5}><path d="M0 0h10L5 5z" fill="#555" /></Svg></FieldCaret>
            </FieldBtn>
          </Chart>
        </GridArea>
        <VScroll>
          <ScrollBtn><Svg w={7} h={4}><path d="M0 4h7L3.5 0z" fill="#777" /></Svg></ScrollBtn>
          <VThumb />
          <VTrack />
          <ScrollBtn><Svg w={7} h={4}><path d="M0 0h7L3.5 4z" fill="#777" /></Svg></ScrollBtn>
        </VScroll>
      </SheetRow>

      <TabBar>
        <SheetNav>
          <Svg w={5} h={8}><path d="M5 0v8L0 4z" fill="#c6c6c6" /></Svg>
          <Svg w={5} h={8}><path d="M0 0v8l5-4z" fill="#c6c6c6" /></Svg>
        </SheetNav>
        <SheetTab>Sheet1</SheetTab>
        <AddSheet>
          <Svg w={16} h={16}>
            <circle cx="8" cy="8" r="7.3" stroke="#999" />
            <path d="M8 4v8M4 8h8" stroke="#777" strokeWidth="1.6" />
          </Svg>
        </AddSheet>
        <HScrollWrap>
          <HDots><Svg w={2} h={11}><path d="M0 0h2v2H0zM0 4.5h2v2H0zM0 9h2v2H0z" fill="#b4b4b4" /></Svg></HDots>
          <HBtn><Svg w={4} h={7}><path d="M4 0v7L0 3.5z" fill="#555" /></Svg></HBtn>
          <HThumb />
          <HTrack />
          <HBtn><Svg w={4} h={7}><path d="M0 0v7l4-3.5z" fill="#555" /></Svg></HBtn>
        </HScrollWrap>
      </TabBar>

      <StatusBar>
        <StatusLeft>
          <span>就绪</span>
          <Svg w={13} h={12}>
            <circle cx="3" cy="3" r="3" fill="#666" />
            <path d="M6 1h7v11H1V6h5z" fill="#fdfdfd" stroke="#666" strokeWidth=".8" />
            <path d="M2.5 8h9M2.5 10h9M6 6h6" stroke="#666" strokeDasharray="1 1" />
          </Svg>
        </StatusLeft>
        <StatusRight>
          <ViewBtn $on>
            <Svg w={13} h={13}><path d="M.5.5h12v12H.5zM4.5.5v12M8.5.5v12M.5 4.5h12M.5 8.5h12" stroke="#666" /></Svg>
          </ViewBtn>
          <ViewBtn>
            <Svg w={13} h={13}>
              <rect x=".5" y=".5" width="12" height="12" stroke="#666" />
              <path d="M3.5 3v7h6V3zM5 5h3M5 7h3" stroke="#666" />
            </Svg>
          </ViewBtn>
          <ViewBtn>
            <Svg w={13} h={13}><path d="M.5.5h12v12H.5zM.5 8.5h7V.5" stroke="#666" /></Svg>
          </ViewBtn>
          <Zoom>
            <Svg w={120} h={13}>
              <rect x="0" y="6" width="6" height="2" fill="#666" />
              <rect x="10" y="6.5" width="98" height="1" fill="#b4b4b4" />
              <rect x="59" y="4" width="1" height="5" fill="#b4b4b4" />
              <rect x="69" y="1" width="5" height="11" fill="#777" />
              <path d="M113 7h7M116.5 3.500v7" stroke="#666" strokeWidth="1.8" />
            </Svg>
          </Zoom>
          <Percent>175%</Percent>
        </StatusRight>
      </StatusBar>
    </Page>
  )
}
